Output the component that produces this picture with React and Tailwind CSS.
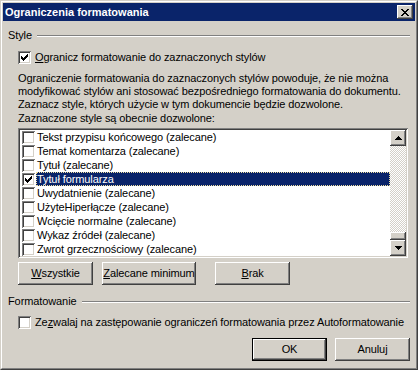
const raised =
  "shadow-[inset_-1px_-1px_#404040,inset_1px_1px_#ffffff,inset_-2px_-2px_#808080,inset_2px_2px_#d4d0c8]";
const sunken =
  "shadow-[inset_1px_1px_#808080,inset_-1px_-1px_#ffffff,inset_2px_2px_#404040,inset_-2px_-2px_#d4d0c8]";

const STYLES = [
  { name: "Tekst przypisu końcowego (zalecane)" },
  { name: "Temat komentarza (zalecane)" },
  { name: "Tytuł (zalecane)" },
  { name: "Tytuł formularza", checked: true, selected: true },
  { name: "Uwydatnienie (zalecane)" },
  { name: "UżyteHiperłącze (zalecane)" },
  { name: "Wcięcie normalne (zalecane)" },
  { name: "Wykaz źródeł (zalecane)" },
  { name: "Zwrot grzecznościowy (zalecane)" },
];

function Check({ checked }) {
  return (
    <div className={`w-[13px] h-[13px] bg-white shrink-0 relative ${sunken}`}>
      {checked && (
        <svg className="absolute left-[3px] top-[3px]" width="7" height="7" viewBox="0 0 7 7">
          <path d="M0 2h1v1h1v1h1V3h1V2h1V1h1V0h1v3H6v1H5v1H4v1H3v1H2V6H1V5H0z" fill="#000" />
        </svg>
      )}
    </div>
  );
}

function Btn({ children, w, def }) {
  return (
    <div className={def ? "border border-black" : ""}>
      <div
        className={`${w} ${def ? "h-[21px]" : "h-[23px]"} flex items-center justify-center bg-[#d4d0c8] ${raised}`}
      >
        {children}
      </div>
    </div>
  );
}

function Group({ label }) {
  return (
    <div className="flex items-center h-[13px] pl-[5px] pr-[5px]">
      <span className="mr-[5px]">{label}</span>
      <div className="flex-1 border-t border-t-[#808080] border-b border-b-white" />
    </div>
  );
}

export default function App() {
  return (
    <div
      className="w-[418px] h-[370px] bg-[#d4d0c8] text-[11px] tracking-[-0.1px] text-black leading-[13px] border border-t-[#d4d0c8] border-l-[#d4d0c8] border-r-[#404040] border-b-[#404040]"
      style={{ fontFamily: '"Liberation Sans", Arial, sans-serif' }}
    >
      <div className="h-full border border-t-white border-l-white border-r-[#808080] border-b-[#808080] p-px flex flex-col">
        {/* title bar */}
        <div className="h-[18px] bg-[#0a246a] flex items-center justify-between pl-[2px] pr-[2px]">
          <span className="text-white font-bold text-[11px] tracking-normal">Ograniczenia formatowania</span>
          <div className={`w-[16px] h-[14px] bg-[#d4d0c8] flex items-center justify-center ${raised}`}>
            <svg width="8" height="7" viewBox="0 0 8 7">
              <path d="M0 0h2v1h1v1h2V1h1V0h2v1H7v1H6v1H5v1h1v1h1v1h1v1H6V6H5V5H3v1H2v1H0V6h1V5h1V4h1V3H2V2H1V1H0z" fill="#000" />
            </svg>
          </div>
        </div>

        <div className="mt-[8px]">
          <Group label="Style" />
        </div>

        <div className="mt-[9px] pl-[15px] flex items-center gap-[4px]">
          <Check checked />
          <span>
            <span className="underline">O</span>granicz formatowanie do zaznaczonych stylów
          </span>
        </div>

        <div className="mt-[8px] pl-[15px] whitespace-nowrap">
          Ograniczenie formatowania do zaznaczonych stylów powoduje, że nie można
          <br />
          modyfikować stylów ani stosować bezpośredniego formatowania do dokumentu.
          <br />
          Zaznacz style, których użycie w tym dokumencie będzie dozwolone.
        </div>

        <div className="mt-[1px] pl-[15px]">Zaznaczone style są obecnie dozwolone:</div>

        {/* list */}
        <div className={`mt-[3px] ml-[15px] w-[390px] h-[130px] bg-white p-[2px] flex ${sunken}`}>
          <div className="flex-1 flex flex-col">
            {STYLES.map((s) => (
              <div key={s.name} className="h-[14px] flex items-center pl-[2px]">
                <Check checked={s.checked} />
                <span
                  className={`ml-px flex-1 h-[14px] pl-px flex items-center ${
                    s.selected ? "bg-[#0a246a] text-white outline outline-1 outline-dotted outline-[#f0e0a0] -outline-offset-1" : ""
                  }`}
                >
                  {s.name}
                </span>
              </div>
            ))}
          </div>
          <div className="w-[16px] flex flex-col bg-[repeating-conic-gradient(#d4d0c8_0%_25%,#ffffff_0%_50%)] bg-[length:2px_2px]">
            <div className={`h-[16px] bg-[#d4d0c8] flex items-center justify-center ${raised}`}>
              <svg width="7" height="4" viewBox="0 0 7 4">
                <path d="M3 0h1v1h1v1h1v1h1v1H0V3h1V2h1V1h1z" fill="#000" />
              </svg>
            </div>
            <div className="flex-1" />
            <div className={`h-[8px] bg-[#d4d0c8] ${raised}`} />
            <div className={`h-[16px] bg-[#d4d0c8] flex items-center justify-center ${raised}`}>
              <svg width="7" height="4" viewBox="0 0 7 4">
                <path d="M0 0h7v1H6v1H5v1H4v1H3V3H2V2H1V1H0z" fill="#000" />
              </svg>
            </div>
          </div>
        </div>

        <div className="mt-[4px] pl-[15px] flex">
          <Btn w="w-[75px]">
            <span><span className="underline">W</span>szystkie</span>
          </Btn>
          <div className="ml-[9px]">
            <Btn w="w-[94px]">
              <span><span className="underline">Z</span>alecane minimum</span>
            </Btn>
          </div>
          <div className="ml-[19px]">
            <Btn w="w-[75px]">
              <span><span className="underline">B</span>rak</span>
            </Btn>
          </div>
        </div>

        <div className="mt-[10px]">
          <Group label="Formatowanie" />
        </div>

        <div className="mt-[8px] pl-[15px] flex items-center gap-[4px]">
          <Check />
          <span className="whitespace-nowrap">
            Ze<span className="underline">z</span>walaj na zastępowanie ograniczeń formatowania przez Autoformatowanie
          </span>
        </div>

        <div className="mt-[9px] flex justify-end pr-[5px] gap-[8px]">
          <Btn w="w-[73px]" def>
            OK
          </Btn>
          <Btn w="w-[75px]">Anuluj</Btn>
        </div>
      </div>
    </div>
  );
}
